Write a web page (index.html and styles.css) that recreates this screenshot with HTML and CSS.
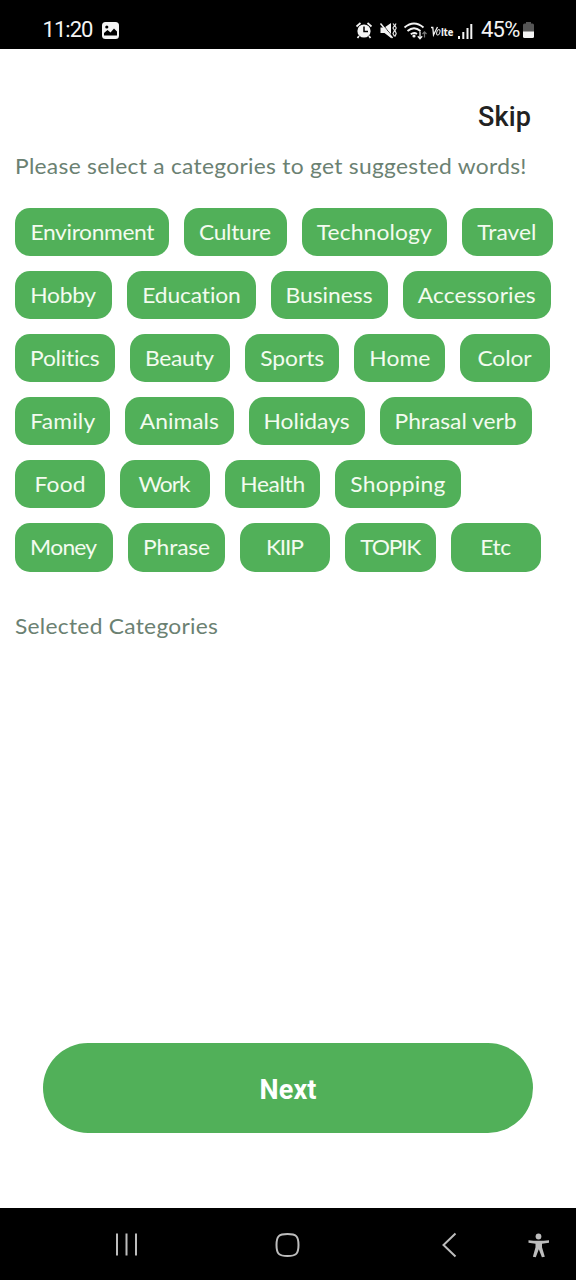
FILE: index.html
```html
<!DOCTYPE html>
<html lang="en">
<head>
<meta charset="utf-8">
<title>Select categories</title>
<link rel="stylesheet" href="styles.css">
</head>
<body>
<div class="screen">
  <header class="status">
    <span class="time fit" data-width="51">11:20</span>
    <svg class="photo" width="17" height="17" viewBox="0 0 17 17"><rect width="17" height="17" rx="3.500" fill="#f4f4f4"/><circle cx="4.800" cy="5" r="1.600" fill="#000"/><path d="M2 13.500V11l3.500-3 3 2.500L12 6.500l3 3v4z" fill="#000"/></svg>
    <svg class="system" width="122" height="22" viewBox="0 0 122 22">
      <g fill="none" stroke="#f4f4f4" stroke-width="1.700">
        <circle cx="9" cy="12" r="6.600" fill="#f4f4f4" stroke="none"/>
        <path d="M9 7.500v5h4" stroke="#000" stroke-width="1.500"/>
        <path d="M1.500 7.500l4-3.500M12.500 4l4 3.500M4 17l-1.500 2M14 17l1.500 2"/>
      </g>
      <path d="M25.500 8.500h4L36 4v15l-6.500-5h-4z" fill="#f4f4f4"/>
      <path d="M26.500 4l12 15" stroke="#000" stroke-width="1"/>
      <path d="M25.500 4.500l12 14.500" stroke="#f4f4f4" stroke-width="1.500"/>
      <path d="M38 4.500l1.500 2-1.500 2.500 1.500 2.500-1.500 3 1.500 3M41 4.500l-1 2 1.200 2.500-1.200 2.500 1.200 3-1.200 3" fill="none" stroke="#ddd" stroke-width="1.200"/>
      <g fill="none" stroke="#f4f4f4" stroke-width="1.800"><path d="M49.500 8.500q9.500-8 19 0M52.500 12q6.500-5.500 13 0M55.800 15.300q3.200-2.500 6.200-.3"/></g>
      <circle cx="59" cy="17" r="1.600" fill="#f4f4f4"/>
      <path d="M65 12.500v7M62.800 17.300l2.200 2.400 2.200-2.400" fill="none" stroke="#f4f4f4" stroke-width="1.300"/>
      <path d="M69.500 18.500v-6M67.500 15l2-2.200 2 2.200" fill="none" stroke="#777" stroke-width="1.200"/>
      <path d="M76 8.500h1.800l.7 7.500 4-8" fill="none" stroke="#f4f4f4" stroke-width="1.300"/>
      <ellipse cx="83.300" cy="13.300" rx="1.500" ry="2.800" transform="rotate(20 83.300 13.300)" fill="none" stroke="#ddd" stroke-width="1"/>
      <text class="lte" x="86" y="16.500" textLength="12.500" lengthAdjust="spacingAndGlyphs">lte</text>
      <g fill="#f4f4f4"><path d="M103 17h2v3h-2zM107.300 13h2v7h-2zM111.500 9h2v11h-2zM115.300 5h2v15h-2z"/></g>
    </svg>
    <span class="percent">45%</span>
    <svg class="battery" width="11" height="16" viewBox="0 0 11 16"><path d="M3 0h5v1.500h1.500Q11 1.500 11 3v7H0V3q0-1.500 1.500-1.500H3z" fill="#555"/><path d="M0 9.500h11v5q0 1.500-1.500 1.500h-8Q0 16 0 14.500z" fill="#f4f4f4"/></svg>
  </header>
  <main class="content">
    <div class="top"><span class="skip fit" data-width="53">Skip</span></div>
    <p class="prompt"><span class="fit wide" data-width="511.500">Please select a categories to get suggested words!</span></p>
    <div class="chips" id="chips"></div>
    <p class="selected"><span class="fit wide" data-width="203">Selected Categories</span></p>
    <button class="next"><span class="fit" data-width="57">Next</span></button>
  </main>
  <nav class="nav">
    <svg width="576" height="72" viewBox="0 0 576 72" fill="none" stroke="#bdbdbd" stroke-width="2">
      <path d="M117 25.500v22M126.500 25.500v22M136 25.500v22"/>
      <path d="M287.500 26C296 26 298.500 28 298.500 37S296 48 287.500 48 276.500 46 276.500 37 279 26 287.500 26z"/>
      <path d="M455.500 25.500L443.500 37l12 11.500"/>
      <g fill="#bdbdbd" stroke="none"><circle cx="538.500" cy="28.500" r="2.900"/><path d="M528.500 32.200q10 1.300 20.500 0v2.600l-7 1v3.500l2.800 9.500-2.900.5-3.100-8-3 8-2.900-.5 2.600-9.500v-3.500l-7-1z"/></g>
    </svg>
  </nav>
</div>
<script src="app.js"></script>
</body>
</html>
```
FILE: styles.css
```css
* { box-sizing: border-box; }
body { margin: 0; background: #fff; }
.screen { width: 576px; height: 1280px; display: flex; flex-direction: column; overflow: hidden; font-family: Lato, sans-serif; }
.status { height: 49px; flex: none; background: #000; color: #f4f4f4; display: flex; align-items: center; padding: 10px 42px 0 42.5px; font: 22px/38px Roboto, sans-serif; }
.photo { margin: 1px 0 0 8.5px; }
.system { margin-left: auto; flex: none; }
.percent { margin-left: 4px; width: 39px; letter-spacing: -0.8px; }
.battery { margin-left: 3px; margin-top: 1px; }
.lte { font: bold 11px "DejaVu Sans", sans-serif; fill: #f4f4f4; }
.content { flex: 1; display: flex; flex-direction: column; padding: 48px 15px 75px; }
.fit { display: inline-block; white-space: nowrap; }
.wide { transform: scaleX(1.06); transform-origin: left; }
.chip .wide { transform-origin: center; }
.top { display: flex; justify-content: flex-end; padding-right: 30px; height: 40px; }
.skip { font: 500 27px/40px Roboto, sans-serif; color: #222; }
.prompt, .selected { margin: 0; font-size: 21.5px; line-height: 30px; color: #6b8172; }
.prompt { margin-top: 14px; }
.chips { display: flex; flex-wrap: wrap; gap: 15px; margin-top: 27px; }
.chip { height: 48.1px; padding-bottom: 1px; border-radius: 15px; background: #51b059; color: #f3fbef; display: flex; align-items: center; justify-content: center; font-size: 21.5px; line-height: 30px; }
.selected { margin-top: 39px; }
.next { height: 90px; margin: auto 28px 0; border: 0; border-radius: 45px; background: #51b059; color: #fff; font: bold 27px/40px Roboto, sans-serif; padding: 3px 0 0; }
.nav { height: 72px; flex: none; background: #000; }
.nav svg { display: block; }
```
FILE: app.js
```js
// Each category: label, chip width, label width.
const categories = [
  ["Environment", 154, 124], ["Culture", 102.5, 72], ["Technology", 145.5, 115], ["Travel", 90.5, 59],
  ["Hobby", 96.5, 66], ["Education", 129.5, 99], ["Business", 117, 87], ["Accessories", 147.5, 118],
  ["Politics", 100, 70], ["Beauty", 100, 69], ["Sports", 94, 64], ["Home", 91, 61], ["Color", 89.5, 54],
  ["Family", 95, 65], ["Animals", 109, 79], ["Holidays", 116, 86], ["Phrasal verb", 152, 122],
  ["Food", 90, 51], ["Work", 90, 52], ["Health", 95, 65], ["Shopping", 125.5, 95],
  ["Money", 97.5, 67], ["Phrase", 97.5, 67], ["KIIP", 90, 38], ["TOPIK", 91, 61], ["Etc", 90, 31]
];

const list = document.getElementById("chips");
for (const [name, width, textWidth] of categories) {
  const chip = document.createElement("div");
  chip.className = "chip";
  chip.style.width = width + "px";
  const label = document.createElement("span");
  label.className = "fit wide";
  label.dataset.width = textWidth;
  label.textContent = name;
  chip.append(label);
  list.append(chip);
}

// Spread the tracking so every label fills its intended width.
for (const el of document.querySelectorAll(".fit")) {
  const scale = el.classList.contains("wide") ? 1.06 : 1;
  const spare = (Number(el.dataset.width) - el.getBoundingClientRect().width) / scale;
  const step = spare / (el.textContent.length - 1);
  el.style.letterSpacing = step + "px";
  el.style.marginRight = -step + "px";
}
```
